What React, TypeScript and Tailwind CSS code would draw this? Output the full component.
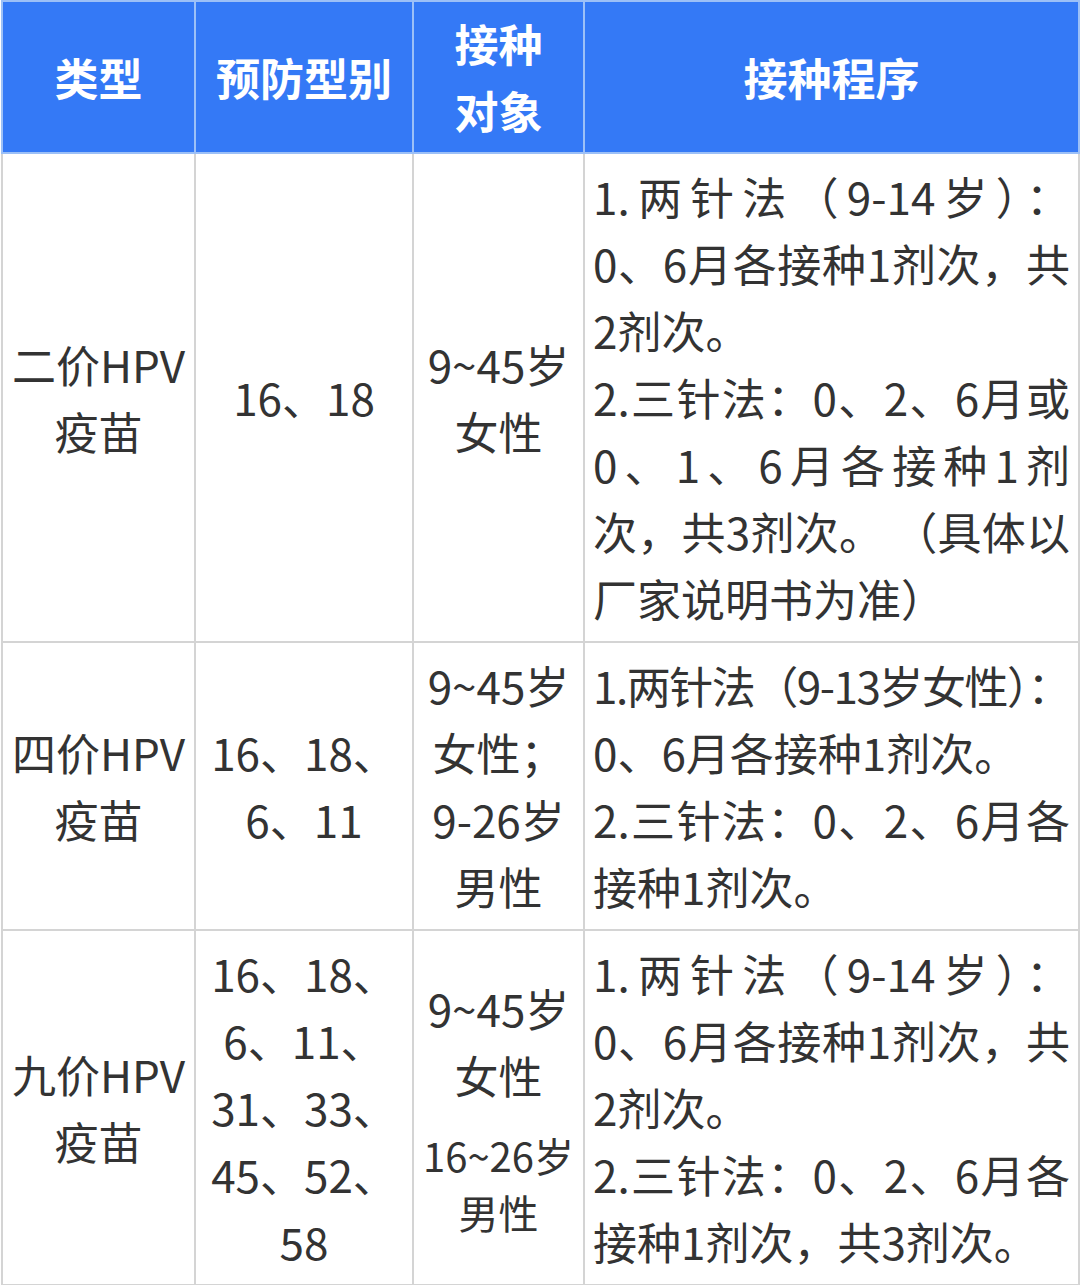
import React from 'react';

type Line = { t: string; j?: boolean; tight?: boolean };

const rows: {
    type: string[];
    serotypes: string[];
    target: string[];
    targetSmall?: string[];
    schedule: Line[];
}[] = [
    {
        type: ['二价HPV', '疫苗'],
        serotypes: ['16、18'],
        target: ['9~45岁', '女性'],
        schedule: [
            { t: '1.两针法（9-14岁）：', j: true },
            { t: '0、6月各接种1剂次，共', j: true },
            { t: '2剂次。' },
            { t: '2.三针法：0、2、6月或', j: true },
            { t: '0、1、6月各接种1剂', j: true },
            { t: '次，共3剂次。 （具体以', j: true },
            { t: '厂家说明书为准）' },
        ],
    },
    {
        type: ['四价HPV', '疫苗'],
        serotypes: ['16、18、', '6、11'],
        target: ['9~45岁', '女性；', '9-26岁', '男性'],
        schedule: [
            { t: '1.两针法（9-13岁女性）：', j: true, tight: true },
            { t: '0、6月各接种1剂次。' },
            { t: '2.三针法：0、2、6月各', j: true },
            { t: '接种1剂次。' },
        ],
    },
    {
        type: ['九价HPV', '疫苗'],
        serotypes: ['16、18、', '6、11、', '31、33、', '45、52、', '58'],
        target: ['9~45岁', '女性'],
        targetSmall: ['16~26岁', '男性'],
        schedule: [
            { t: '1.两针法（9-14岁）：', j: true },
            { t: '0、6月各接种1剂次，共', j: true },
            { t: '2剂次。' },
            { t: '2.三针法：0、2、6月各', j: true },
            { t: '接种1剂次，共3剂次。' },
        ],
    },
];

const Lines = ({ items }: { items: string[] }) => (
    <>
        {items.map((s, i) => (
            <div key={i}>{s}</div>
        ))}
    </>
);

export default function App() {
    return (
        <div className="bg-white w-[1080px] h-[1285px] pl-px" style={{ fontFamily: '"Noto Sans CJK SC", "Noto Sans", sans-serif' }}>
            <table className="table-fixed border-collapse w-[1077px] text-[44px] leading-[67px] text-[#333333]">
                <colgroup>
                    <col className="w-[193px]" />
                    <col className="w-[218px]" />
                    <col className="w-[171px]" />
                    <col className="w-[495px]" />
                </colgroup>
                <thead>
                    <tr className="bg-[#3479f6] text-white font-bold">
                        <th className="border-2 border-[#9cc0f7] py-2 font-bold">类型</th>
                        <th className="border-2 border-[#9cc0f7] py-2 font-bold">预防型别</th>
                        <th className="border-2 border-[#9cc0f7] py-2 font-bold">
                            <div>接种</div>
                            <div>对象</div>
                        </th>
                        <th className="border-2 border-[#9cc0f7] py-2 font-bold">接种程序</th>
                    </tr>
                </thead>
                <tbody>
                    {rows.map((r, i) => (
                        <tr key={i}>
                            <td className="border-2 border-[#d4d4d4] py-[9px] text-center align-middle">
                                <Lines items={r.type} />
                            </td>
                            <td className="border-2 border-[#d4d4d4] py-[9px] text-center align-middle">
                                <Lines items={r.serotypes} />
                            </td>
                            <td className="border-2 border-[#d4d4d4] py-[9px] text-center align-middle">
                                <Lines items={r.target} />
                                {r.targetSmall && (
                                    <div className="mt-[18px] text-[40px] leading-[57px]">
                                        <Lines items={r.targetSmall} />
                                    </div>
                                )}
                            </td>
                            <td className="border-2 border-[#d4d4d4] py-[9px] px-2 align-middle">
                                {r.schedule.map((l, k) => (
                                    <div
                                        key={k}
                                        className={
                                            l.j
                                                ? l.tight
                                                    ? 'whitespace-nowrap tracking-[-1.5px] text-justify [text-align-last:justify]'
                                                    : 'whitespace-nowrap text-justify [text-align-last:justify]'
                                                : 'whitespace-nowrap text-left'
                                        }
                                    >
                                        {l.t}
                                    </div>
                                ))}
                            </td>
                        </tr>
                    ))}
                </tbody>
            </table>
        </div>
    );
}
